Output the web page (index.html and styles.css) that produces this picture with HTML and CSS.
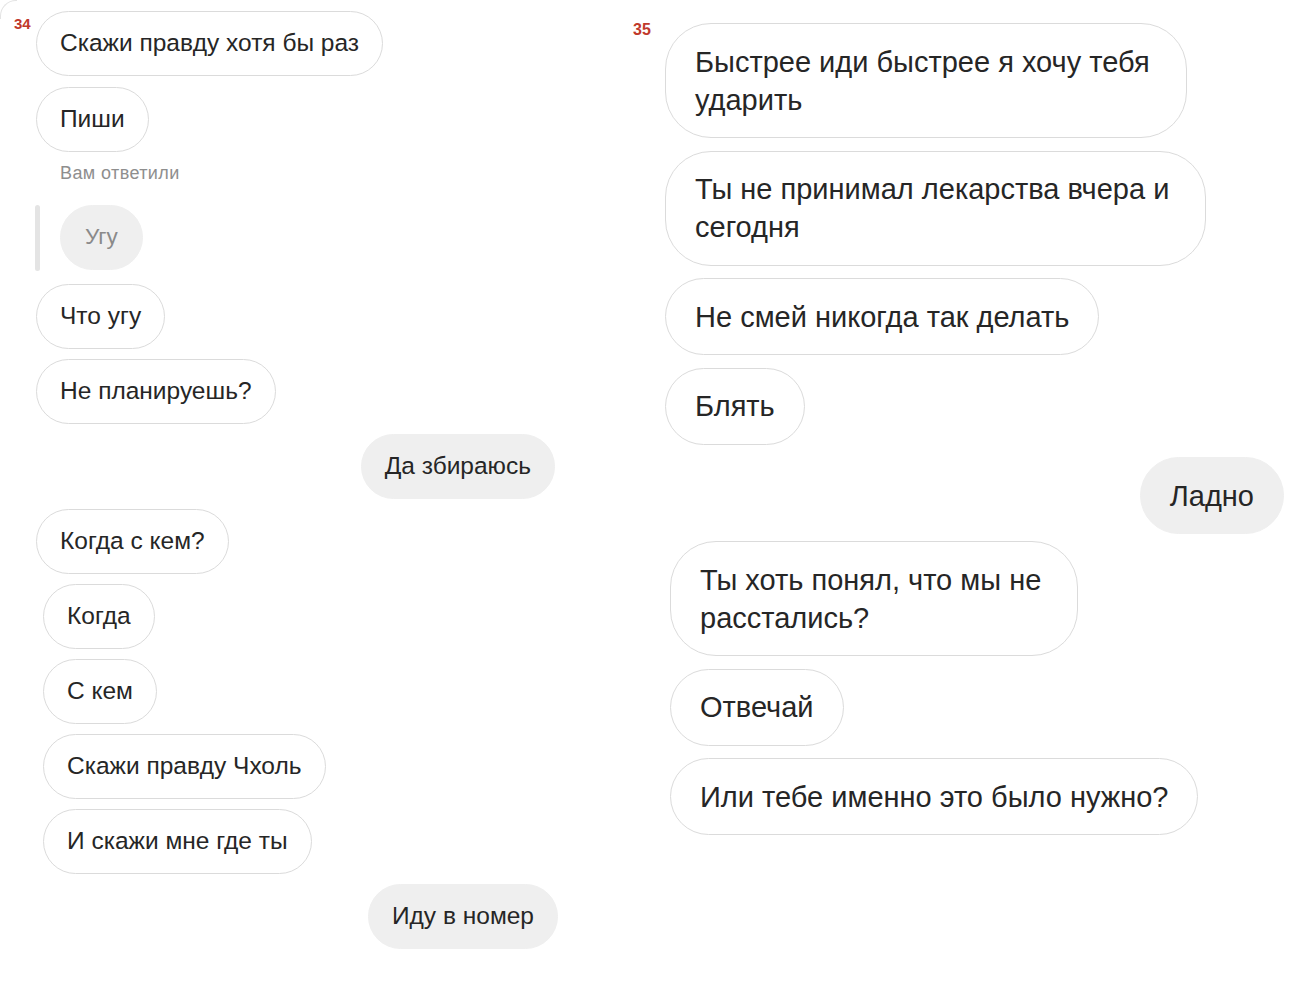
FILE: index.html
```html
<!DOCTYPE html>
<html lang="ru">
<head>
<meta charset="utf-8">
<title>Переписка</title>
<link rel="stylesheet" href="styles.css">
</head>
<body>
<main class="page">
  <section class="panel panel-left">
    <span class="num num-left">34</span>
    <div class="thread thread-left">
      <div class="bubble in">Скажи правду хотя бы раз</div>
      <div class="bubble in gap-s">Пиши</div>
      <div class="reply-label">Вам ответили</div>
      <div class="reply">
        <span class="reply-bar"></span>
        <div class="bubble quoted">Угу</div>
      </div>
      <div class="bubble in after-reply">Что угу</div>
      <div class="bubble in">Не планируешь?</div>
      <div class="bubble out">Да збираюсь</div>
      <div class="bubble in">Когда с кем?</div>
      <div class="shift-left">
        <div class="bubble in">Когда</div>
        <div class="bubble in">С кем</div>
        <div class="bubble in">Скажи правду Чхоль</div>
        <div class="bubble in">И скажи мне где ты</div>
        <div class="bubble out out-shift">Иду в номер</div>
      </div>
    </div>
  </section>
  <section class="panel panel-right">
    <span class="num num-right">35</span>
    <div class="thread thread-right">
      <div class="group">
        <div class="bubble in wrapped">Быстрее иди быстрее я хочу тебя<br>ударить</div>
        <div class="bubble in wrapped">Ты не принимал лекарства вчера и<br>сегодня</div>
        <div class="bubble in">Не смей никогда так делать</div>
        <div class="bubble in">Блять</div>
        <div class="bubble out">Ладно</div>
      </div>
      <div class="group group-shift">
        <div class="bubble in wrapped">Ты хоть понял, что мы не<br>расстались?</div>
        <div class="bubble in">Отвечай</div>
        <div class="bubble in">Или тебе именно это было нужно?</div>
      </div>
    </div>
  </section>
</main>
</body>
</html>
```

FILE: styles.css
```css
* { box-sizing: border-box; }

html, body {
  margin: 0;
  padding: 0;
  background: #ffffff;
}

body {
  font-family: "Liberation Sans", Arial, sans-serif;
  color: #262626;
  width: 1303px;
  height: 992px;
  overflow: hidden;
}

.page {
  display: flex;
  align-items: flex-start;
}

.panel {
  display: flex;
  align-items: flex-start;
  position: relative;
}

.panel-left {
  width: 620px;
  padding-left: 14px;
  padding-top: 11px;
}

.panel-left::before {
  content: "";
  position: absolute;
  left: 0;
  top: 0;
  width: 16px;
  height: 18px;
  border-top: 1px solid #e4e4e4;
  border-left: 1px solid #e4e4e4;
  border-top-left-radius: 16px;
}

.panel-right {
  width: 683px;
  padding-left: 13px;
  padding-top: 23px;
}

.num {
  color: #c0392b;
  font-weight: bold;
  font-size: 15px;
  line-height: 16px;
}

.num-left {
  width: 22px;
  margin-top: 5px;
}

.num-right {
  width: 32px;
  margin-top: -1px;
  font-size: 16px;
}

.thread {
  display: flex;
  flex-direction: column;
  align-items: flex-start;
}

.thread-left {
  width: 519px;
  font-size: 24.5px;
  gap: 10px;
}

.thread-right {
  width: 619px;
  font-size: 29px;
}

.bubble {
  border: 1px solid #dbdbdb;
  border-radius: 40px;
  white-space: nowrap;
}

.thread-left .bubble {
  height: 65px;
  line-height: 62px;
  padding: 0 23px;
}

.thread-left .gap-s {
  margin-top: 1px;
}

.bubble.out {
  align-self: flex-end;
  background: #efefef;
  border-color: #efefef;
}

.reply-label {
  font-size: 18px;
  line-height: 20px;
  color: #8e8e8e;
  padding-left: 24px;
  margin-top: 1px;
  letter-spacing: 0.4px;
}

.reply {
  display: flex;
  align-items: stretch;
  margin-top: 12px;
  height: 66px;
}

.reply-bar {
  width: 5px;
  margin-left: -1px;
  margin-right: 20px;
  background: #e4e4e4;
  border-radius: 3px;
}

.thread-left .bubble.quoted {
  background: #efefef;
  border-color: #efefef;
  color: #8a8a8a;
  font-size: 22.5px;
  padding: 0 24px;
}

.after-reply {
  margin-top: 3px;
}

.shift-left {
  display: flex;
  flex-direction: column;
  align-items: flex-start;
  gap: 10px;
  width: 522px;
  padding-left: 7px;
}

.thread-right .group {
  display: flex;
  flex-direction: column;
  align-items: flex-start;
  gap: 12.5px;
  width: 619px;
}

.thread-right .bubble {
  line-height: 38px;
  padding: 18.5px 29px;
  border-radius: 46px;
}

.thread-right .bubble.wrapped {
  padding-right: 36px;
  border-radius: 46px;
}

.group-shift {
  margin-top: 7px;
  padding-left: 5px;
}
```
